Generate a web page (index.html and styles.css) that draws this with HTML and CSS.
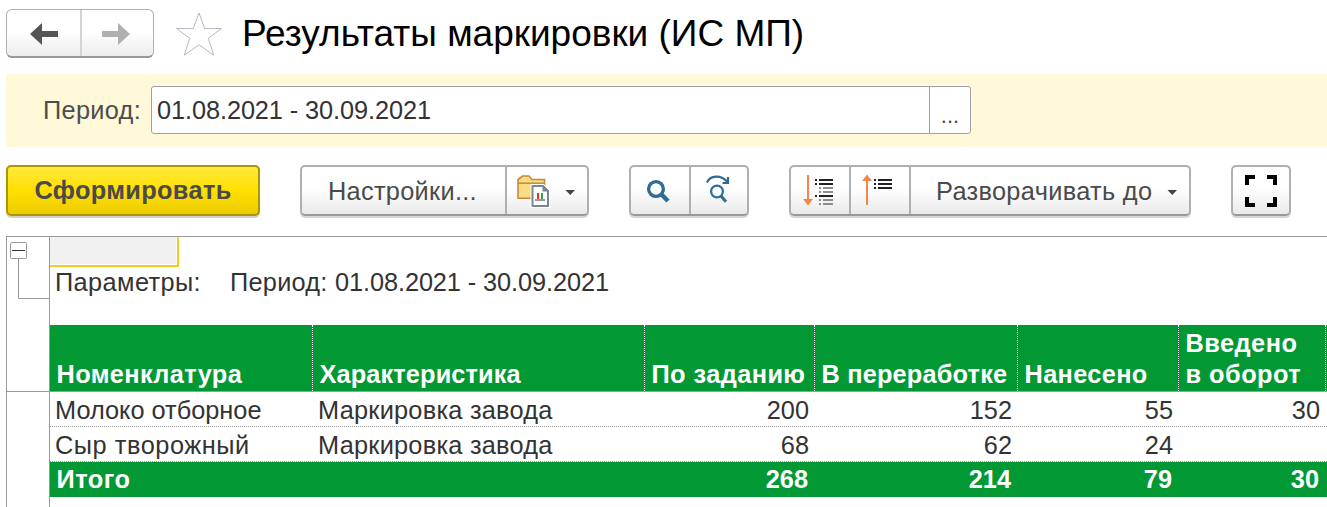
FILE: index.html
```html
<!DOCTYPE html>
<html lang="ru">
<head>
<meta charset="utf-8">
<title>Результаты маркировки (ИС МП)</title>
<link rel="stylesheet" href="styles.css">
</head>
<body>
<header class="header">
  <div class="nav">
    <button class="nav-btn" aria-label="Назад"><svg width="73" height="46" viewBox="7 10 73 46"><path fill="#555" d="M30 34 42 23v8h16v6H42v8z"/></svg></button>
    <button class="nav-btn" aria-label="Вперёд"><svg width="71" height="46" viewBox="82 10 71 46"><path fill="#b0b0b0" d="M130 34 118 23v8h-16v6h16v8z"/></svg></button>
  </div>
  <svg class="star" width="48" height="46" viewBox="175 11 48 46"><path fill="#fff" stroke="#b4bac2" d="M199 13 204.700 28.500H221.500L208.300 38.300 213.700 55.200 199 44.800 184.300 55.200 189.700 38.300 176.500 28.500H193.300z"/></svg>
  <h1 class="title">Результаты маркировки (ИС МП)</h1>
</header>

<section class="filter">
  <label class="filter-label">Период:</label>
  <div class="field">
    <span class="field-value dates">01.08.2021 - 30.09.2021</span>
    <button class="field-more">...</button>
  </div>
</section>

<div class="toolbar">
  <button class="primary"><span>Сформировать</span></button>
  <div class="group">
    <button class="cell settings"><span>Настройки...</span></button>
    <button class="cell" aria-label="Варианты"><svg width="80" height="47" viewBox="507 167 80 47">
      <path fill="#fbdc84" stroke="#c68b38" stroke-width="1.600" d="M518 198.200V179.500L522.500 176H529L532 179.500H544.500V198.200z"/>
      <path fill="none" stroke="#c68b38" stroke-width="1.500" d="M518 183.200H544.500"/>
      <path fill="#fff" stroke="#fff" stroke-width="4" d="M532.500 186H543L548 191V206H532.500z"/>
      <path fill="#fff" stroke="#76878f" stroke-width="2" stroke-linejoin="round" d="M532.500 186H543L548 191V206H532.500z"/>
      <path fill="#76878f" d="M542.500 185.500V191.500H548.500z"/>
      <path fill="#f02c20" d="M537 193h2v6h-2z"/><path fill="#3da03d" d="M541 193h2v6h-2z"/><path fill="#999" d="M535 199h10v2h-10z"/>
      <path fill="#444" d="M565.500 190h9.500l-4.750 5z"/></svg></button>
  </div>
  <div class="group">
    <button class="cell" aria-label="Найти"><svg width="58" height="47" viewBox="631 167 58 47"><g fill="none" stroke="#2f6b92"><circle cx="656" cy="189" r="7.400" stroke-width="3.300"/><path stroke-width="4.400" d="M661.500 194.500 668 201"/></g></svg></button>
    <button class="cell" aria-label="Найти далее"><svg width="56" height="47" viewBox="691 167 56 47"><g fill="none" stroke="#2f6b92" stroke-width="2.200"><circle cx="717" cy="191.500" r="5.900"/><path stroke-width="3" d="M721 196 726 201.800"/><path d="M707 182.500C710 175 721 174.500 727.500 182"/><path d="M728 177V183H722.500"/></g></svg></button>
  </div>
  <div class="group">
    <button class="cell" aria-label="Развернуть"><svg width="58" height="47" viewBox="791 167 58 47">
      <path fill="#f58549" d="M807 175h2v24h4l-5 6.500-5-6.500h4z"/>
      <path fill="#222" d="M815 179h2v2h-2zM819 179h14v2h-14zM815 183h2v2h-2zM819 183h14v2h-14zM815 195h2v2h-2zM819 195h14v2h-14z"/>
      <path fill="#8d8d8d" d="M819 187h2v2h-2zM823 187h10v2h-10zM819 191h2v2h-2zM823 191h10v2h-10zM819 199h2v2h-2zM823 199h10v2h-10zM819 203h2v2h-2zM823 203h10v2h-10z"/></svg></button>
    <button class="cell" aria-label="Свернуть"><svg width="58" height="47" viewBox="851 167 58 47">
      <path fill="#f58549" d="M866 205h2v-24h4l-5-6.500-5 6.500h4z"/>
      <path fill="#222" d="M874 179h2v2h-2zM878 179h14v2h-14zM874 183h2v2h-2zM878 183h14v2h-14zM874 187h2v2h-2zM878 187h14v2h-14z"/></svg></button>
    <button class="cell expand"><span>Разворачивать до</span><svg width="22" height="47" viewBox="1167 167 22 47"><path fill="#444" d="M1167.500 190h9.500l-4.750 5z"/></svg></button>
  </div>
  <div class="group">
    <button class="cell" aria-label="На весь экран"><svg width="56" height="47" viewBox="1233 167 56 47"><path fill="#000" d="M1245 175h10v4h-6v6h-4zM1267 175h10v10h-4v-6h-6zM1245 197h4v6h6v4h-10zM1273 197h4v10h-10v-4h6z"/></svg></button>
  </div>
</div>

<main class="sheet">
  <aside class="outline">
    <svg width="42" height="154" viewBox="7 237 42 154"><path fill="none" stroke="#999" d="M18.500 259V298.500H49"/><rect x="10.500" y="242.500" width="16" height="16" rx="1" fill="#fff" stroke="#999"/><path stroke="#333" d="M12 250.500H25"/></svg>
  </aside>
  <div class="content">
    <div class="active-cell"></div>
    <div class="params"><span class="params-name">Параметры:</span><span class="params-label">Период:</span><span class="dates">01.08.2021 - 30.09.2021</span></div>
    <div class="table">
      <div class="row head">
        <div class="td name">Номенклатура</div><div class="td trait">Характеристика</div><div class="td task">По заданию</div><div class="td work">В переработке</div><div class="td applied">Нанесено</div><div class="td issued">Введено<br>в оборот</div>
      </div>
      <div class="row">
        <div class="td">Молоко отборное</div><div class="td mark">Маркировка завода</div><div class="td num">200</div><div class="td num">152</div><div class="td num">55</div><div class="td num">30</div>
      </div>
      <div class="row">
        <div class="td wide">Сыр творожный</div><div class="td mark">Маркировка завода</div><div class="td num">68</div><div class="td num">62</div><div class="td num">24</div><div class="td num"></div>
      </div>
      <div class="row total">
        <div class="td wide">Итого</div><div class="td"></div><div class="td num">268</div><div class="td num">214</div><div class="td num">79</div><div class="td num">30</div>
      </div>
    </div>
  </div>
</main>
</body>
</html>
```

FILE: styles.css
```css
* { box-sizing: border-box; }
body {
  margin: 0;
  height: 507px;
  overflow: hidden;
  background: #fff;
  color: #333;
  font: 25.33px/30px "Liberation Sans", Arial, sans-serif;
  white-space: nowrap;
}
button {
  margin: 0;
  padding: 0;
  border: 0;
  background: none;
  color: #4a4a4a;
  font: inherit;
}
svg { display: block; flex: none; }
.dates { letter-spacing: -0.09px; }

.header { display: flex; height: 74px; padding: 9px 0 0 6px; }
.nav {
  display: flex;
  width: 148px;
  height: 49px;
  border: 1px solid #b0b0b0;
  border-bottom: 2px solid #999;
  border-radius: 6px;
  background: linear-gradient(#fff 45%, #ededed);
}
.nav-btn + .nav-btn { border-left: 2px solid #d4d4d4; }
.star { margin: 2px 0 0 21px; }
.title {
  margin: 4px 0 0 19px;
  color: #000;
  font-size: 37px;
  font-weight: 400;
  line-height: 42px;
}

.filter {
  display: flex;
  height: 73px;
  margin-left: 6px;
  padding-top: 12px;
  background: #fff9d9;
}
.filter-label { width: 145px; padding: 9px 0 0 37px; color: #4d4d4d; letter-spacing: 0.3px; }
.field {
  display: flex;
  width: 820px;
  height: 48px;
  border: 1px solid #a0a0a0;
  border-radius: 3px;
  background: #fff;
}
.field-value { flex: 1; padding: 8px 0 0 5px; }
.field-more { width: 41px; padding-top: 12px; border-left: 1px solid #a0a0a0; font-size: 22px; }

.toolbar { display: flex; gap: 40px; padding: 18px 0 0 6px; height: 89px; }
.primary {
  width: 254px;
  height: 51px;
  padding-bottom: 2px;
  border: 2px solid #ab9700;
  border-radius: 5px;
  background: linear-gradient(#ffe93c, #ffe000 50%, #eccb00);
  box-shadow: 0 2px 0 #d0d0d0;
  font-weight: 700;
  letter-spacing: 0.35px;
}
.group {
  display: flex;
  height: 51px;
  border: 2px solid #b0b0b0;
  border-bottom-color: #999;
  border-radius: 5px;
  background: linear-gradient(#fff 45%, #eaeaea);
  box-shadow: 0 2px 0 #d6d6d6;
}
.cell { display: flex; align-items: center; }
.cell + .cell { border-left: 2px solid #b0b0b0; }
.settings { width: 203px; padding-left: 26px; letter-spacing: 0.3px; }
.expand { width: 280px; padding-left: 25px; justify-content: space-between; letter-spacing: 0.33px; }

.sheet {
  display: flex;
  height: 271px;
  margin-left: 6px;
  border-top: 1px solid #999;
  border-left: 1px solid #999;
}
.outline { width: 43px; border-right: 1px solid #999; }
.outline svg { box-sizing: content-box; border-bottom: 1px solid #999; }
.content { flex: 1; }
.active-cell {
  width: 129px;
  height: 30px;
  border: solid #f9c81e;
  border-width: 0 2px 2px 0;
  background: #f1f1f1;
  box-shadow: inset -1px -1px #fff;
}
.params { display: flex; height: 58px; padding-left: 5px; }
.params-name { width: 175px; letter-spacing: 0.4px; }
.params-label { width: 105px; letter-spacing: 0.25px; }
.row {
  display: grid;
  grid-template-columns: 263px 332px 170px 203px 161px 147px;
  height: 35px;
  border-bottom: 1px dotted #999;
}
.td { padding: 3px 6px 0 5px; }
.num { text-align: right; }
.mark { letter-spacing: 0.25px; }
.wide { letter-spacing: 0.54px; }
.head {
  height: 67px;
  border-bottom: 1px solid #8aa88a;
  background: #029935;
  color: #fff;
  font-weight: 700;
}
.head .td {
  display: flex;
  align-items: flex-end;
  padding: 0 0 1px 6.5px;
  border-right: 1px dotted #fff;
  line-height: 31px;
}
.name { letter-spacing: 0.38px; }
.trait { letter-spacing: 0.12px; }
.task { letter-spacing: 0.42px; }
.work { letter-spacing: 0.18px; }
.applied { letter-spacing: 0.35px; }
.issued { letter-spacing: 0.48px; }
.total { border: 0; background: #029935; color: #fff; font-weight: 700; }
.total .td { padding: 2px 7px 0 6.5px; }
```
